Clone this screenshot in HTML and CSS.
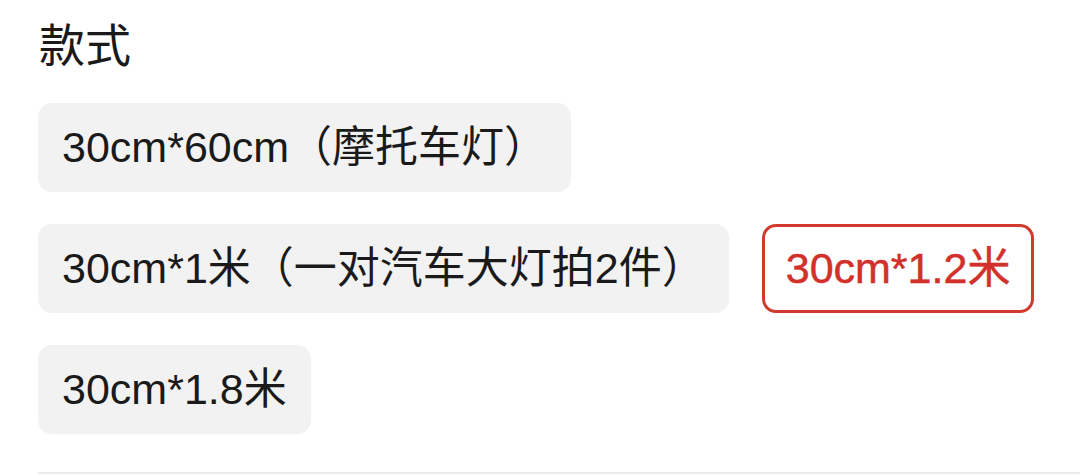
FILE: index.html
```html
<!DOCTYPE html>
<html lang="zh-CN">
<head>
    <meta charset="UTF-8">
    <meta name="viewport" content="width=device-width, initial-scale=1.0">
    <title>款式</title>
    <link rel="stylesheet" href="styles.css">
</head>
<body>
    <div class="sku-panel">
        <h2 class="sku-title">款式</h2>
        <div class="sku-options">
            <div class="sku-chip">30cm*60cm（摩托车灯）</div>
            <div class="sku-chip">30cm*1米（一对汽车大灯拍2件）</div>
            <div class="sku-chip selected">30cm*1.2米</div>
            <div class="sku-chip">30cm*1.8米</div>
        </div>
        <div class="divider"></div>
    </div>
</body>
</html>
```

FILE: styles.css
```css
body {
    margin: 0;
    padding: 0;
    background: #ffffff;
    font-family: "Liberation Sans", "Noto Sans CJK SC", sans-serif;
    color: #1a1a1a;
}
.sku-panel {
    padding: 19px 30px 0 38px;
}
.sku-title {
    margin: 0 0 38px 1px;
    font-size: 46px;
    font-weight: normal;
    line-height: 46px;
    font-family: "Noto Sans CJK SC", sans-serif;
}
.sku-options {
    display: flex;
    flex-wrap: wrap;
    gap: 32px 33px;
}
.sku-chip {
    height: 89px;
    box-sizing: border-box;
    display: flex;
    align-items: center;
    padding: 0 22px;
    background: #f2f2f2;
    border: 2px solid #f2f2f2;
    border-radius: 14px;
    font-size: 43px;
    line-height: 1;
    white-space: nowrap;
}
.sku-chip.selected {
    background: #ffffff;
    border: 3px solid #d23a2e;
    padding: 0 21px;
    color: #d2302a;
    -webkit-text-stroke: 0.5px #d2302a;
}
.divider {
    margin-top: 38px;
    height: 2px;
    background: #ececec;
    margin-right: -30px;
}
```
